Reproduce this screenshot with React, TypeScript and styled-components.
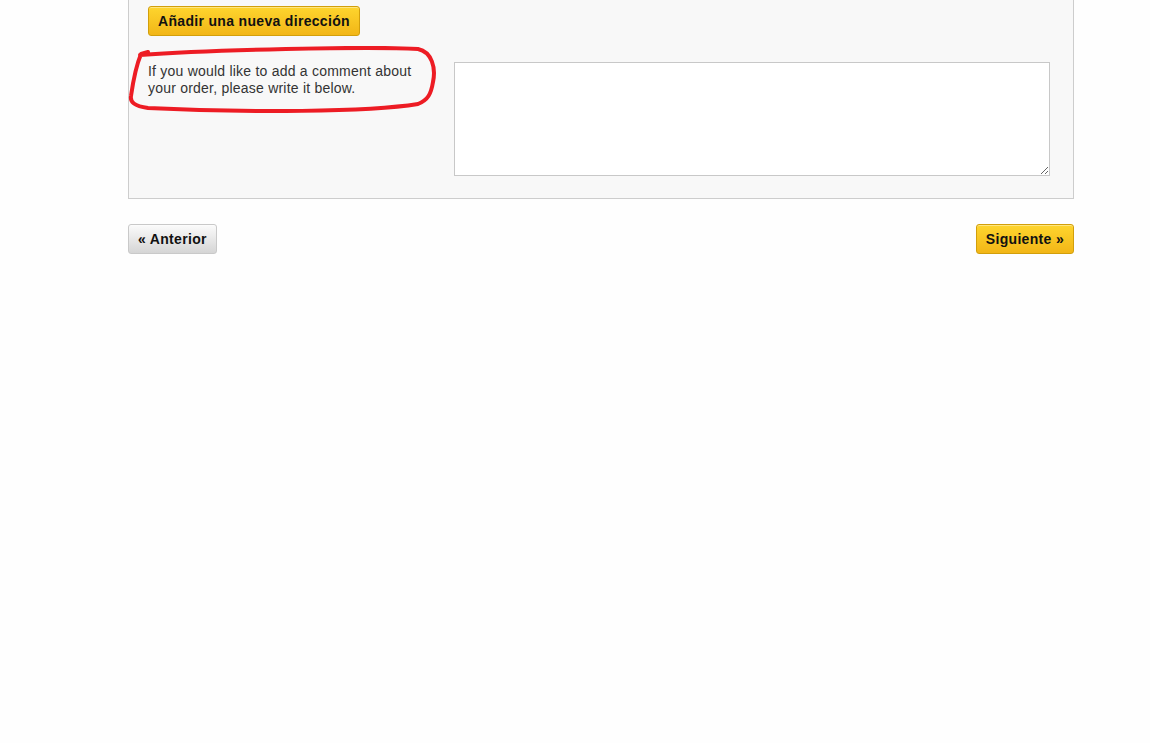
import React from 'react'
import styled, { createGlobalStyle } from 'styled-components'

const ADD_ADDRESS = 'Añadir una nueva dirección'
const COMMENT_LABEL =
  'If you would like to add a comment about your order, please write it below.'
const PREV = '« Anterior'
const NEXT = 'Siguiente »'

const GlobalStyle = createGlobalStyle`
  html, body {
    margin: 0;
    padding: 0;
    background: #fefefe;
    font-family: "Liberation Sans", Arial, sans-serif;
    color: #333;
  }
`

const Page = styled.div`
  width: 946px;
  margin-left: 128px;
`

const Panel = styled.div`
  background: #f8f8f8;
  border: 1px solid #cdcdcd;
  border-top: none;
  padding: 6px 23px 22px 19px;
`

const Button = styled.button<{ $variant?: 'primary' | 'secondary' }>`
  display: inline-flex;
  align-items: center;
  height: 30px;
  padding: 0 9px;
  border-radius: 3px;
  font-family: "Liberation Sans", Arial, sans-serif;
  font-weight: bold;
  font-size: 14px;
  letter-spacing: 0.32px;
  color: #111;
  cursor: pointer;
  border: 1px solid ${(p) => (p.$variant === 'secondary' ? '#c9c9c9' : '#d29f0b')};
  background: ${(p) =>
    p.$variant === 'secondary'
      ? 'linear-gradient(#fbfbfb, #d5d5d5)'
      : 'linear-gradient(#fed52e, #f2b617)'};
  box-shadow: inset 0 1px 0 rgba(255, 255, 255, 0.4);
`

const CommentRow = styled.div`
  position: relative;
  display: flex;
  gap: 20px;
  margin-top: 26px;
`

const Label = styled.p`
  margin: 0;
  width: 286px;
  box-sizing: border-box;
  padding: 1px 16px 0 0;
  font-size: 14px;
  line-height: 17px;
  letter-spacing: 0.22px;
  color: #333;
`

const Comment = styled.textarea`
  flex: 1;
  height: 114px;
  box-sizing: border-box;
  border: 1px solid #c8c8c8;
  background: #fff;
  margin: 0;
  padding: 4px;
  resize: vertical;
  font-family: "Liberation Sans", Arial, sans-serif;
  font-size: 14px;
`

const Scribble = styled.svg`
  position: absolute;
  left: -20px;
  top: -16px;
  pointer-events: none;
`

const Nav = styled.div`
  display: flex;
  justify-content: space-between;
  margin-top: 25px;
`

export default function App() {
  return (
    <>
      <GlobalStyle />
      <Page>
        <Panel>
          <Button>{ADD_ADDRESS}</Button>
          <CommentRow>
            <Label>{COMMENT_LABEL}</Label>
            <Comment />
            <Scribble width="312" height="72" viewBox="0 0 312 72">
              <path
                d="M 12 9 C 80 4, 240 0, 290 3 C 304 6, 308 22, 305 36 C 303 48, 300 54, 290 58 C 240 66, 120 67, 20 62 C 6 60, 2 56, 3 50 C 5 36, 8 20, 13 8 L 20 6"
                fill="none"
                stroke="#ed1c24"
                strokeWidth="4"
                strokeLinecap="round"
                strokeLinejoin="round"
              />
            </Scribble>
          </CommentRow>
        </Panel>
        <Nav>
          <Button $variant="secondary">{PREV}</Button>
          <Button>{NEXT}</Button>
        </Nav>
      </Page>
    </>
  )
}
